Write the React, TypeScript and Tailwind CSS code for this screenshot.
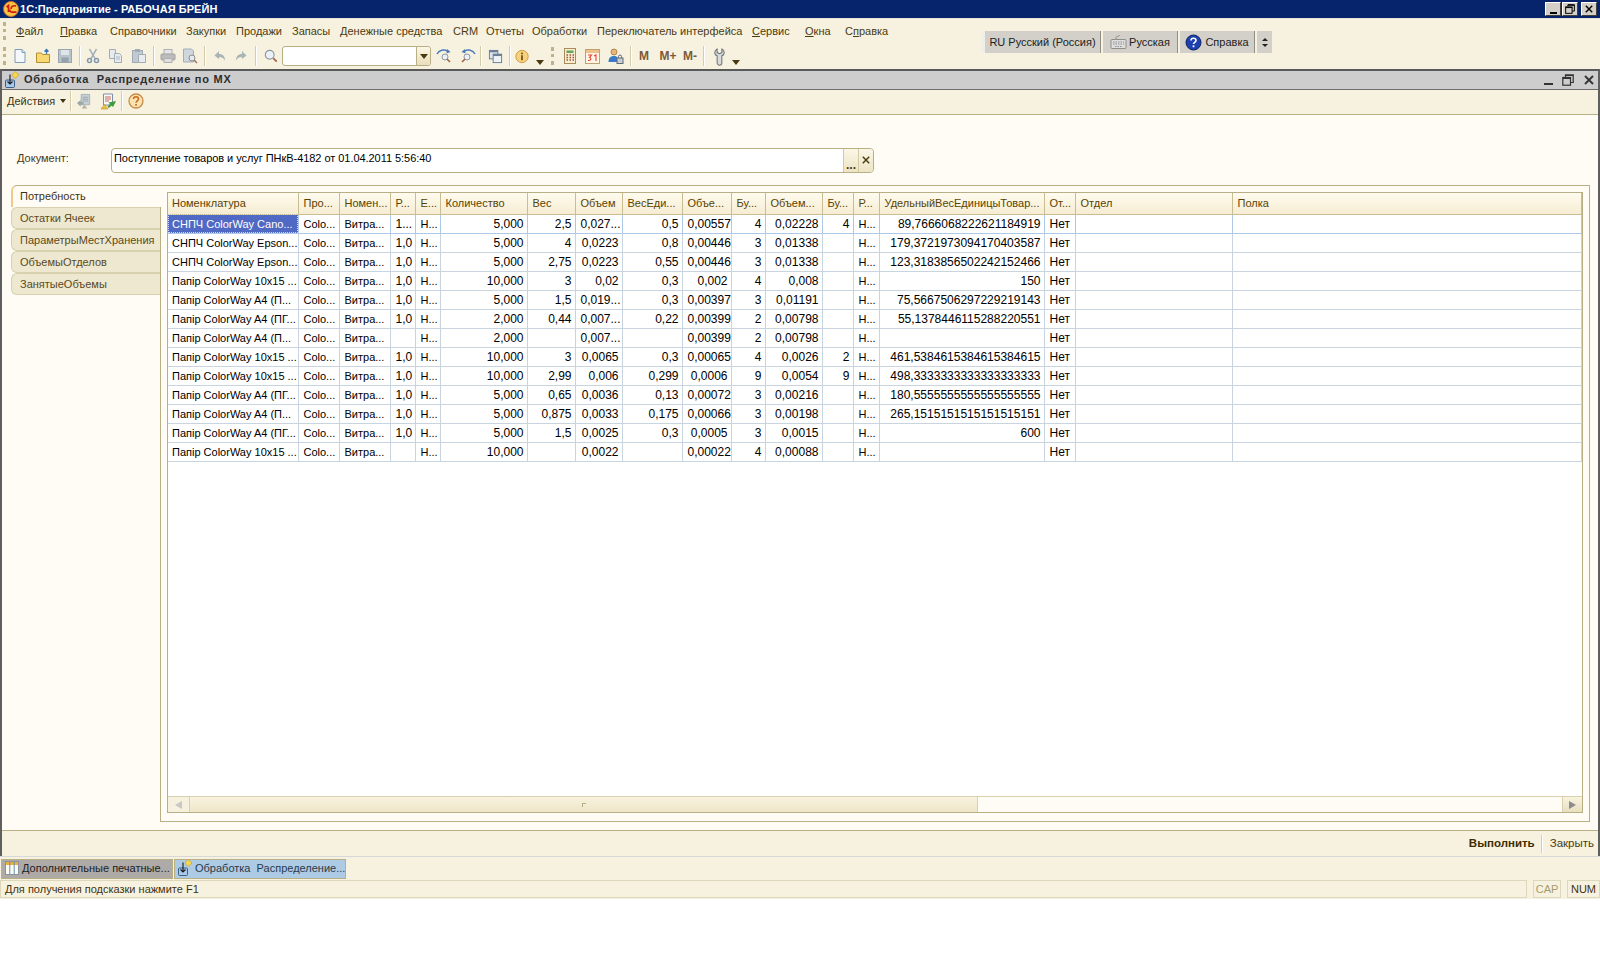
import type { ReactNode } from "react";

const FONT = "font-['Liberation_Sans',Arial,sans-serif]";

/* ---------- icons ---------- */

function Logo1C() {
  return (
    <svg width="16" height="16" viewBox="0 0 16 16" className="shrink-0">
      <circle cx="8" cy="8" r="7.5" fill="#f6c445" stroke="#c9702a" />
      <path d="M3.5 6 5.5 4.5V11M8 8c0-3 2-3.5 5-3.2M6.5 8.5c0 2.8 2.5 3 7 2.5" fill="none" stroke="#d01a12" strokeWidth="1.7" />
    </svg>
  );
}

function NewDoc() {
  return (
    <svg width="16" height="16" viewBox="0 0 16 16">
      <path d="M3 1.5h7l3 3v10H3z" fill="#f4f8fd" stroke="#7f9db9" />
      <path d="M10 1.5v3h3" fill="#d5e3f2" stroke="#7f9db9" />
    </svg>
  );
}

function Folder() {
  return (
    <svg width="16" height="16" viewBox="0 0 16 16">
      <path d="M1.5 5h5l1 1.500h7v8h-13z" fill="#f8d872" stroke="#b48f32" />
      <path d="M11.500 6V1.500M9.500 3.500l2-2 2 2" fill="none" stroke="#3a78b8" strokeWidth="1.300" />
    </svg>
  );
}

function Save() {
  return (
    <svg width="16" height="16" viewBox="0 0 16 16">
      <rect x="1.500" y="1.500" width="13" height="13" fill="#b8c3cc" stroke="#9aa5ae" />
      <rect x="4" y="2" width="8" height="5" fill="#dfe4e8" />
      <rect x="4.500" y="9.500" width="7" height="4.500" fill="#95a1ab" />
    </svg>
  );
}

function Cut() {
  return (
    <svg width="16" height="16" viewBox="0 0 16 16" fill="none" stroke="#a5b1bb" strokeWidth="1.500">
      <path d="M4.500 1 10 10.500M11.500 1 6 10.500" />
      <circle cx="4.500" cy="12.500" r="2" stroke="#8398ad" />
      <circle cx="11.500" cy="12.500" r="2" stroke="#8398ad" />
    </svg>
  );
}

function Copy() {
  return (
    <svg width="16" height="16" viewBox="0 0 16 16" fill="#e6ebef" stroke="#a2adb6">
      <path d="M1.500 1.500h6v9h-6z" />
      <path d="M6.500 5.500h5l2 2v7h-7z" />
      <path d="M8 9h4M8 11h4" strokeWidth="0.800" />
    </svg>
  );
}

function Paste() {
  return (
    <svg width="16" height="16" viewBox="0 0 16 16">
      <rect x="1.500" y="2.500" width="10" height="12" fill="#c1cad1" stroke="#a0abb4" />
      <rect x="4" y="1" width="5" height="3" fill="#a0abb4" />
      <path d="M7.500 6.500h7v8h-7z" fill="#e6ebef" stroke="#a2adb6" />
    </svg>
  );
}

function Printer() {
  return (
    <svg width="16" height="16" viewBox="0 0 16 16">
      <rect x="4" y="1.500" width="8" height="5" fill="#e3e6e8" stroke="#b0b0b0" />
      <rect x="1" y="6" width="14" height="6" rx="1" fill="#bcbcbc" stroke="#a0a0a0" />
      <rect x="4" y="10.500" width="8" height="4" fill="#dedede" stroke="#b0b0b0" />
    </svg>
  );
}

function Preview() {
  return (
    <svg width="16" height="16" viewBox="0 0 16 16">
      <path d="M1.500 1h8l2 2v11h-10z" fill="#cfd7de" stroke="#a2adb6" />
      <circle cx="10" cy="10" r="3" fill="#e3e9ee" stroke="#8d8d8d" />
      <path d="m12 12 3 3" stroke="#9a7b68" strokeWidth="1.600" />
    </svg>
  );
}

function Undo({ flip }: { flip?: boolean }) {
  return (
    <svg width="14" height="14" viewBox="0 0 14 14" className={flip ? "-scale-x-100" : ""}>
      <path d="M6 2 1.500 6.500 6 10V8c3 0 4.500 1 6 3.500C12 7.500 10 5 6 5z" fill="#a9b4b4" />
    </svg>
  );
}

function Lens({ size = 16 }: { size?: number }) {
  return (
    <svg width={size} height={size} viewBox="0 0 16 16">
      <circle cx="6.500" cy="6.500" r="5" fill="#eaf1f8" stroke="#8d97a0" strokeWidth="1.300" />
      <path d="m10.500 10.500 4 4" stroke="#a5664a" strokeWidth="2" />
    </svg>
  );
}

function NavSearch({ flip }: { flip?: boolean }) {
  return (
    <svg width="17" height="16" viewBox="0 0 17 16" className={flip ? "-scale-x-100" : ""}>
      <path d="M1 6C3 2 8 1 12 3.500" fill="none" stroke="#4a7db8" strokeWidth="1.500" />
      <path d="m11 1 3.500 3-4 1.500z" fill="#4a7db8" />
      <circle cx="9" cy="9" r="3" fill="#eaf1f8" stroke="#8d97a0" />
      <path d="m11 11 3 3" stroke="#a5664a" strokeWidth="1.700" />
    </svg>
  );
}

function Windows() {
  return (
    <svg width="15" height="15" viewBox="0 0 16 16">
      <rect x="1.500" y="1.500" width="9" height="9" fill="#dce6f0" stroke="#6a7d92" />
      <rect x="1.500" y="1.500" width="9" height="2" fill="#6a7d92" />
      <rect x="5.500" y="5.500" width="9" height="9" fill="#eef3f8" stroke="#6a7d92" />
      <rect x="5.500" y="5.500" width="9" height="2" fill="#6a7d92" />
    </svg>
  );
}

function Info() {
  return (
    <svg width="17" height="17" viewBox="0 0 17 17">
      <circle cx="8.500" cy="8.500" r="7.500" fill="#f7d27c" stroke="#c98f3c" />
      <rect x="7.500" y="7" width="2" height="6" fill="#6b4a12" />
      <rect x="7.500" y="3.800" width="2" height="2" fill="#6b4a12" />
    </svg>
  );
}

function Calc() {
  return (
    <svg width="14" height="16" viewBox="0 0 14 16">
      <rect x="1.500" y="0.500" width="11" height="15" fill="#f6eecf" stroke="#a88d58" />
      <rect x="3.500" y="2.500" width="7" height="2.500" fill="#6aa35a" />
      <path d="M3.500 7h1.500M6.500 7H8M9.500 7H11M3.500 9.500h1.500M6.500 9.500H8M9.500 9.500H11M3.500 12h1.500M6.500 12H8M9.500 12H11" stroke="#a5503a" strokeWidth="1.400" />
    </svg>
  );
}

function Calendar() {
  return (
    <svg width="15" height="16" viewBox="0 0 15 16">
      <rect x="0.500" y="1.500" width="14" height="14" fill="#fff6e8" stroke="#c4a06e" />
      <rect x="1" y="2" width="13" height="3" fill="#eec08a" />
      <path d="M3 7h3.500L4.500 9.500c2 0 2 3.500-1.500 3M9 8l2-1v6" fill="none" stroke="#e8412c" strokeWidth="1.100" />
    </svg>
  );
}

function UserLock() {
  return (
    <svg width="16" height="17" viewBox="0 0 16 17">
      <circle cx="6" cy="4" r="3" fill="#eab575" stroke="#9a6a2f" strokeWidth="0.700" />
      <path d="M0.500 14c0-4 2-6 5.500-6s4 2 4 6z" fill="#3a78c8" />
      <rect x="9" y="10" width="6" height="5.500" fill="#c9ced4" stroke="#5f6b77" />
      <path d="M10.500 10V8.500a1.500 1.500 0 0 1 3 0V10" fill="none" stroke="#5f6b77" />
    </svg>
  );
}

function Wrench() {
  return (
    <svg width="11" height="19" viewBox="0 0 14 22">
      <path d="M4 1.500V6l3 1.500L10 6V1.500c2 1 3 3 3 4.500 0 2-1 3.500-3 4v9a2.500 2.500 0 0 1-6 0v-9C2 9.500 1 8 1 6c0-1.500 1-3.500 3-4.500z" fill="#d8dadc" stroke="#6e7276" strokeWidth="1.300" />
    </svg>
  );
}

function Caret() {
  return <span className="block w-0 h-0 border-x-[4px] border-x-transparent border-t-[5px] border-t-[#4a3a10]" />;
}

function Grip({ className }: { className: string }) {
  return <div className={`${className} h-[18px] border-l-[3px] border-dotted border-[#bdb28a]`} />;
}

function Sep({ className }: { className: string }) {
  return (
    <div className={`${className} flex justify-center shrink-0`}>
      <div className="w-[2px] h-[20px] border-l border-[#d5cca8] border-r border-r-white" />
    </div>
  );
}

function Slot({ className, children }: { className: string; children: ReactNode }) {
  return <div className={`${className} h-[22px] flex items-center justify-center shrink-0`}>{children}</div>;
}

function DocIcon() {
  return (
    <svg width="18" height="18" viewBox="0 0 18 18" className="shrink-0">
      <path d="M11 0.500 15 4l-4 3.500L8 4z" fill="#f8d848" stroke="#c8a030" strokeWidth="0.700" />
      <rect x="1.500" y="9" width="9" height="7.500" rx="1" fill="#a9c9ea" stroke="#3d5f85" />
      <path d="M6 3.500v9M3.500 10.500 6 13l2.500-2.500" fill="none" stroke="#1a1a1a" strokeWidth="1.100" />
    </svg>
  );
}

function HelpCircle() {
  return (
    <svg width="16" height="16" viewBox="0 0 16 16">
      <circle cx="8" cy="8" r="7" fill="#fbe3b0" stroke="#c98b4a" strokeWidth="1.300" />
      <path d="M5.500 6c0-3 5-3 5 0 0 1.800-2.500 1.800-2.500 3.800" fill="none" stroke="#c86a20" strokeWidth="1.500" />
      <rect x="7.200" y="11" width="1.700" height="1.700" fill="#c86a20" />
    </svg>
  );
}

function ActionOne() {
  return (
    <svg width="17" height="17" viewBox="0 0 17 17">
      <path d="M5.500 1h9v11h-9z" fill="#c8d0d6" stroke="#a9b2b9" />
      <path d="M7 4h6M7 6h6M7 8h6" stroke="#9aa5ad" />
      <path d="m1 10 4-3v2h3v3H5v2z" fill="#9ba8a5" />
      <path d="M6 16l3-4 3 4z" fill="#b5aea0" />
    </svg>
  );
}

function ActionTwo() {
  return (
    <svg width="17" height="17" viewBox="0 0 17 17">
      <path d="M3.500 1h9v11h-9z" fill="#f6f8fb" stroke="#7c8fa5" />
      <path d="M5 4h6M5 6h6M5 8h4" stroke="#c46a50" />
      <path d="m16 8-3 6-1.500-1.500L9 15 7.500 13.500 10 11 8.500 9.500z" fill="#3e9a3a" />
      <path d="M1 16l3.500-4.500L8 16z" fill="#f0c040" stroke="#b48f32" strokeWidth="0.600" />
    </svg>
  );
}

function Keyboard() {
  return (
    <svg width="17" height="16" viewBox="0 0 17 16" fill="none" stroke="#8e8e8e" className="shrink-0">
      <path d="M6 5V3.500C6 2 9 3 9.500 1" />
      <rect x="1" y="5.500" width="15" height="9" rx="1" fill="#dedede" />
      <path d="M3 8h11M3 10h11M5 12.500h7" strokeDasharray="1.500 1" />
    </svg>
  );
}

function BlueHelp() {
  return (
    <svg width="17" height="17" viewBox="0 0 17 17" className="shrink-0">
      <circle cx="8.500" cy="8.500" r="7.500" fill="#1d3fb0" stroke="#0d2160" />
      <path d="M6 6.500c0-3 5-3 5 0 0 1.800-2.500 1.800-2.500 3.500" fill="none" stroke="#fff" strokeWidth="1.600" />
      <rect x="7.600" y="11.400" width="1.800" height="1.800" fill="#fff" />
    </svg>
  );
}

function ColumnsIcon() {
  return (
    <svg width="14" height="14" viewBox="0 0 14 14" className="shrink-0">
      <rect x="0.500" y="0.500" width="13" height="13" fill="#fbfbf3" stroke="#8a94a0" />
      <rect x="1" y="1" width="12" height="3" fill="#e8b23c" />
      <path d="M4.800 1v12M9.200 1v12" stroke="#6f8bb0" />
    </svg>
  );
}

/* ---------- window buttons ---------- */

function WinButton({ children }: { children: ReactNode }) {
  return (
    <div className="w-[16px] h-[14px] bg-[#d4d0c8] border border-t-white border-l-white border-r-[#404040] border-b-[#404040] flex items-center justify-center">
      {children}
    </div>
  );
}

function RestoreGlyph({ color, size }: { color: string; size: number }) {
  return (
    <svg width={size} height={size} viewBox="0 0 12 12" fill="none" stroke={color} strokeWidth="1.200">
      <path d="M3.500 3V0.800h7.700v7.700H8.500" />
      <rect x="0.800" y="3.500" width="7.700" height="7.700" />
      <path d="M0.800 4.300h7.700M3.500 1.500h7.700" />
    </svg>
  );
}

function CloseGlyph({ color, size }: { color: string; size: number }) {
  return (
    <svg width={size} height={size} viewBox="0 0 10 10" fill="none" stroke={color} strokeWidth="1.800">
      <path d="m1 1 8 8M9 1l-8 8" />
    </svg>
  );
}

/* ---------- data ---------- */

const MENU = [
  { pre: "", u: "Ф", post: "айл", cls: "w-[44px]" },
  { pre: "", u: "П", post: "равка", cls: "w-[50px]" },
  { pre: "Справочники", u: "", post: "", cls: "w-[76px]" },
  { pre: "Закупки", u: "", post: "", cls: "w-[50px]" },
  { pre: "Продажи", u: "", post: "", cls: "w-[56px]" },
  { pre: "Запасы", u: "", post: "", cls: "w-[48px]" },
  { pre: "Денежные средства", u: "", post: "", cls: "w-[113px]" },
  { pre: "CRM", u: "", post: "", cls: "w-[33px]" },
  { pre: "Отчеты", u: "", post: "", cls: "w-[46px]" },
  { pre: "Обработки", u: "", post: "", cls: "w-[65px]" },
  { pre: "Переключатель интерфейса", u: "", post: "", cls: "w-[155px]" },
  { pre: "", u: "С", post: "ервис", cls: "w-[53px]" },
  { pre: "", u: "О", post: "кна", cls: "w-[40px]" },
  { pre: "С", u: "п", post: "равка", cls: "w-[50px]" },
];

const COLS = [
  { title: "Номенклатура", w: "w-[130px]", right: false, size: "text-[11px] pt-px" },
  { title: "Про...", w: "w-[41px]", right: false, size: "text-[11px] pt-px" },
  { title: "Номен...", w: "w-[51px]", right: false, size: "text-[11px] pt-px" },
  { title: "Р...", w: "w-[25px]", right: false, size: "text-[12px]" },
  { title: "Е...", w: "w-[25px]", right: false, size: "text-[11px] pt-px" },
  { title: "Количество", w: "w-[87px]", right: true, size: "text-[12px]" },
  { title: "Вес", w: "w-[48px]", right: true, size: "text-[12px]" },
  { title: "Объем", w: "w-[47px]", right: true, size: "text-[12px]" },
  { title: "ВесЕди...", w: "w-[60px]", right: true, size: "text-[12px]" },
  { title: "Объе...", w: "w-[49px]", right: true, size: "text-[12px]" },
  { title: "Бу...", w: "w-[34px]", right: true, size: "text-[12px]" },
  { title: "Объем...", w: "w-[57px]", right: true, size: "text-[12px]" },
  { title: "Бу...", w: "w-[31px]", right: true, size: "text-[12px]" },
  { title: "Р...", w: "w-[26px]", right: false, size: "text-[11px] pt-px" },
  { title: "УдельныйВесЕдиницыТовар...", w: "w-[165px]", right: true, size: "text-[12px]" },
  { title: "От...", w: "w-[31px]", right: false, size: "text-[12px]" },
  { title: "Отдел", w: "w-[157px]", right: false, size: "text-[11px] pt-px" },
  { title: "Полка", w: "w-[349px]", right: false, size: "text-[11px] pt-px" },
];

const CANO = "СНПЧ ColorWay Cano...";
const EPSON = "СНПЧ ColorWay Epson...";
const P10 = "Папір ColorWay 10x15 ...";
const PA = "Папір ColorWay A4 (П...";
const PG = "Папір ColorWay A4 (ПГ...";

const ROWS: string[][] = [
  [CANO, "1...", "5,000", "2,5", "0,027...", "0,5", "0,00557", "4", "0,02228", "4", "89,7666068222621184919"],
  [EPSON, "1,0", "5,000", "4", "0,0223", "0,8", "0,00446", "3", "0,01338", "", "179,3721973094170403587"],
  [EPSON, "1,0", "5,000", "2,75", "0,0223", "0,55", "0,00446", "3", "0,01338", "", "123,3183856502242152466"],
  [P10, "1,0", "10,000", "3", "0,02", "0,3", "0,002", "4", "0,008", "", "150"],
  [PA, "1,0", "5,000", "1,5", "0,019...", "0,3", "0,00397", "3", "0,01191", "", "75,5667506297229219143"],
  [PG, "1,0", "2,000", "0,44", "0,007...", "0,22", "0,00399", "2", "0,00798", "", "55,1378446115288220551"],
  [PA, "", "2,000", "", "0,007...", "", "0,00399", "2", "0,00798", "", ""],
  [P10, "1,0", "10,000", "3", "0,0065", "0,3", "0,00065", "4", "0,0026", "2", "461,5384615384615384615"],
  [P10, "1,0", "10,000", "2,99", "0,006", "0,299", "0,0006", "9", "0,0054", "9", "498,3333333333333333333"],
  [PG, "1,0", "5,000", "0,65", "0,0036", "0,13", "0,00072", "3", "0,00216", "", "180,5555555555555555555"],
  [PA, "1,0", "5,000", "0,875", "0,0033", "0,175", "0,00066", "3", "0,00198", "", "265,1515151515151515151"],
  [PG, "1,0", "5,000", "1,5", "0,0025", "0,3", "0,0005", "3", "0,0015", "", "600"],
  [P10, "", "10,000", "", "0,0022", "", "0,00022", "4", "0,00088", "", ""],
];

function expandRow(r: string[]) {
  return [r[0], "Colo...", "Витра...", r[1], "Н...", r[2], r[3], r[4], r[5], r[6], r[7], r[8], r[9], "Н...", r[10], "Нет", "", ""];
}

const TABS = ["Потребность", "Остатки Ячеек", "ПараметрыМестХранения", "ОбъемыОтделов", "ЗанятыеОбъемы"];

/* ---------- parts ---------- */

function Toolbar() {
  return (
    <div className="h-[22px] flex items-center mt-[2px]">
      <div className="w-[3px]" />
      <Grip className="w-[6px]" />
      <Slot className="w-[22px]"><NewDoc /></Slot>
      <Slot className="w-[24px]"><Folder /></Slot>
      <Slot className="w-[20px]"><Save /></Slot>
      <Sep className="w-[10px]" />
      <Slot className="w-[16px]"><Cut /></Slot>
      <Slot className="w-[30px]"><Copy /></Slot>
      <Slot className="w-[16px]"><Paste /></Slot>
      <Sep className="w-[13px]" />
      <Slot className="w-[16px]"><Printer /></Slot>
      <Slot className="w-[28px]"><Preview /></Slot>
      <Sep className="w-[2px]" />
      <Slot className="w-[28px]"><Undo /></Slot>
      <Slot className="w-[14px]"><Undo flip /></Slot>
      <Sep className="w-[16px]" />
      <Slot className="w-[14px]"><Lens /></Slot>
      <div className="ml-[4px] w-[149px] h-[20px] bg-white border border-[#b9af85] rounded-[3px] flex justify-end shrink-0">
        <div className="w-[14px] border-l border-[#b9af85] bg-gradient-to-b from-[#fbf7e6] to-[#e9dfbb] rounded-r-[3px] flex items-center justify-center">
          <Caret />
        </div>
      </div>
      <Slot className="w-[26px]"><NavSearch /></Slot>
      <Slot className="w-[20px]"><NavSearch flip /></Slot>
      <Sep className="w-[8px]" />
      <Slot className="w-[20px]"><Windows /></Slot>
      <Sep className="w-[10px]" />
      <Slot className="w-[14px]"><Info /></Slot>
      <Slot className="w-[22px]"><div className="mt-[13px]"><Caret /></div></Slot>
      <Grip className="w-[7px]" />
      <Slot className="w-[24px]"><Calc /></Slot>
      <Slot className="w-[20px]"><Calendar /></Slot>
      <Slot className="w-[28px]"><UserLock /></Slot>
      <Sep className="w-[2px]" />
      <Slot className="w-[24px]"><span className="text-[12px] font-bold text-[#7a5a3a]">M</span></Slot>
      <Slot className="w-[24px]"><span className="text-[12px] font-bold text-[#7a5a3a]">M+</span></Slot>
      <Slot className="w-[20px]"><span className="text-[12px] font-bold text-[#7a5a3a]">M-</span></Slot>
      <Sep className="w-[8px]" />
      <Slot className="w-[22px]"><Wrench /></Slot>
      <Slot className="w-[12px]"><div className="mt-[13px]"><Caret /></div></Slot>
    </div>
  );
}

function LangBar() {
  return (
    <div className="mt-[12px] ml-[982px] h-[22px] flex items-stretch gap-[2px] text-[11px] text-[#222] whitespace-nowrap">
      <div className="w-[119px] border-l-[3px] border-l-[#efefe8] bg-[#d2d0c9] flex items-center justify-center border-r border-r-[#8f8f88]">
        RU Русский (Россия)
      </div>
      <div className="w-[75px] bg-[#d2d0c9] flex items-center justify-center gap-[2px] border-r border-r-[#8f8f88]">
        <Keyboard />
        Русская
      </div>
      <div className="w-[75px] bg-[#d2d0c9] flex items-center justify-center gap-[3px] border-r border-r-[#8f8f88]">
        <BlueHelp />
        Справка
      </div>
      <div className="w-[15px] bg-[#d2d0c9] flex flex-col items-center justify-center gap-[3px]">
        <span className="w-0 h-0 border-x-[3px] border-x-transparent border-b-[3px] border-b-[#222]" />
        <span className="w-0 h-0 border-x-[3px] border-x-transparent border-t-[3px] border-t-[#222]" />
      </div>
    </div>
  );
}

function Grid() {
  return (
    <div className="flex-1 min-w-0 border border-[#b9af85] bg-white flex flex-col min-h-0">
      <div className="flex-1 overflow-hidden">
        <table className="table-fixed border-collapse w-[1413px]">
          <colgroup>
            {COLS.map((c, i) => (
              <col key={i} className={c.w} />
            ))}
          </colgroup>
          <thead>
            <tr className="h-[21px]">
              {COLS.map((c, i) => (
                <th
                  key={i}
                  className={`p-0 ${i === 0 ? "pl-[4px]" : "pl-[5px]"} font-normal text-[11px] text-left text-[#5a4300] whitespace-nowrap overflow-hidden bg-gradient-to-b from-[#fffbee] to-[#f5ecd2] border-r border-b border-[#c9be93]`}
                >
                  {c.title}
                </th>
              ))}
            </tr>
          </thead>
          <tbody>
            {ROWS.map((r, ri) => (
              <tr key={ri} className="h-[19px]">
                {expandRow(r).map((v, ci) => {
                  const sel = ri === 0 && ci === 0;
                  const line = ri === 0 ? "border-[#aec8e8]" : "border-[#c8d4e0]";
                  return (
                    <td
                      key={ci}
                      className={`p-0 ${ci === 0 ? "pl-[4px]" : "pl-[5px]"} pr-[3px] whitespace-nowrap overflow-hidden border-r border-b ${COLS[ci].size} ${line} ${
                        COLS[ci].right ? "text-right" : "text-left"
                      } ${sel ? "bg-[#4f69c4] text-white outline-1 outline-dotted outline-offset-[-1px] outline-[#d5dcf2]" : "text-black"}`}
                    >
                      {v}
                    </td>
                  );
                })}
              </tr>
            ))}
          </tbody>
        </table>
      </div>
      <div className="h-[16px] flex border-t border-[#d8d0ae] bg-[#fffcf5]">
        <div className="w-[22px] border-r border-[#d8d0ae] bg-[#f6f1de] flex items-center justify-center">
          <span className="w-0 h-0 border-y-[4px] border-y-transparent border-r-[7px] border-r-[#c9c9c4]" />
        </div>
        <div className="w-[788px] border-r border-[#d8d0ae] bg-gradient-to-b from-[#f8f3df] to-[#efe6c8] flex items-center justify-center">
          <span className="w-[4px] h-[4px] border-l border-t border-[#b5ac88]" />
        </div>
        <div className="flex-1" />
        <div className="w-[20px] border-l border-[#d8d0ae] bg-gradient-to-b from-[#f8f3df] to-[#e9dfbf] flex items-center justify-center">
          <span className="w-0 h-0 border-y-[4px] border-y-transparent border-l-[7px] border-l-[#8a8a90]" />
        </div>
      </div>
    </div>
  );
}

export default function App() {
  return (
    <div className={`${FONT} w-[1600px] h-[980px] bg-white text-[11px] overflow-hidden`}>
      {/* Заголовок приложения */}
      <div className="h-[18px] bg-[#06246c] flex items-center pl-[3px] pr-[3px]">
        <Logo1C />
        <span className="ml-[1px] text-white font-bold text-[11px] tracking-[0.05px]">1С:Предприятие - РАБОЧАЯ БРЕЙН</span>
        <div className="ml-auto flex items-center">
          <WinButton><span className="mt-[7px] w-[7px] h-[2px] bg-black" /></WinButton>
          <div className="w-px" />
          <WinButton><RestoreGlyph color="#000" size={10} /></WinButton>
          <div className="w-[3px]" />
          <WinButton><CloseGlyph color="#000" size={8} /></WinButton>
        </div>
      </div>

      {/* Меню и панели */}
      <div className="h-[51px] bg-[#f7f2df] border-t border-[#e8e4d4] flex">
        <div className="w-0">
          <div className="w-[979px] h-[24px] flex items-center text-[11px] text-[#4a3a10]">
            <div className="w-[3px]" />
            <Grip className="w-[13px]" />
            {MENU.map((m, i) => (
              <span key={i} className={`${m.cls} whitespace-nowrap shrink-0`}>
                {m.pre}
                {m.u && <u>{m.u}</u>}
                {m.post}
              </span>
            ))}
          </div>
          <div className="w-[979px]">
            <Toolbar />
          </div>
        </div>
        <LangBar />
      </div>

      {/* Окно обработки */}
      <div className="h-[787px] border-x-2 border-[#5f5f5f] flex flex-col bg-[#fffcf5]">
        <div className="h-[21px] bg-[#cdcdcd] border-t-2 border-b border-t-[#5a5a5a] border-b-[#6d6d6d] flex items-center pl-[2px] pr-[3px] shrink-0">
          <DocIcon />
          <span className="ml-[2px] pb-[2px] font-bold text-[11px] tracking-[0.75px] text-[#2d2d2d] whitespace-pre">Обработка  Распределение по МХ</span>
          <div className="ml-auto flex items-center">
            <span className="w-[9px] h-[2px] bg-[#333] mt-[7px]" />
            <div className="w-[9px]" />
            <RestoreGlyph color="#333" size={12} />
            <div className="w-[10px]" />
            <CloseGlyph color="#333" size={10} />
            <div className="w-[1px]" />
          </div>
        </div>

        <div className="h-[25px] bg-[#f7f2df] border-b border-[#b9af85] flex items-center pl-[5px] pb-[2px] text-[#3f3210] shrink-0">
          <span className="w-[50px]">Действия</span>
          <span className="ml-[3px] w-0 h-0 border-x-[3px] border-x-transparent border-t-[4px] border-t-[#3f3210] shrink-0" />
          <Sep className="w-[10px]" />
          <Slot className="w-[16px]"><ActionOne /></Slot>
          <Slot className="ml-[4px] w-[24px]"><ActionTwo /></Slot>
          <Sep className="w-[4px]" />
          <Slot className="w-[24px]"><HelpCircle /></Slot>
        </div>

        <div className="flex-1 min-h-0 flex flex-col pt-[33px] pb-[8px] pl-[9px] pr-[8px]">
          <div className="h-[24px] flex items-center shrink-0">
            <span className="w-[100px] pl-[6px] mb-[4px] text-[#4a3a10]">Документ:</span>
            <div className="w-[763px] h-[25px] bg-white border border-[#b9af85] rounded-[4px] flex items-stretch">
              <span className="flex-1 pl-[2px] pt-[1px] text-black tracking-[-0.05px]">Поступление товаров и услуг ПНкВ-4182 от 01.04.2011 5:56:40</span>
              <div className="w-[15px] border-l border-[#d3caa5] bg-gradient-to-b from-[#fbf7e6] to-[#ede4c4] flex items-end justify-center text-[12px] text-[#4a3a10] font-bold leading-[14px]">...</div>
              <div className="w-[15px] border-l border-[#d3caa5] bg-gradient-to-b from-[#fbf7e6] to-[#ede4c4] rounded-r-[4px] flex items-center justify-center">
                <CloseGlyph color="#4a3a10" size={8} />
              </div>
            </div>
          </div>

          <div className="flex-1 min-h-0 flex mt-[13px]">
            <div className="w-[150px] -mr-px relative flex flex-col shrink-0">
              {TABS.map((t, i) => (
                <div
                  key={t}
                  className={
                    i === 0
                      ? "h-[22px] pl-[7px] pb-[1px] flex items-center border-t border-l-2 border-t-[#b9af85] border-l-[#f0c98a] rounded-tl-[6px] bg-[#fffcf5] text-[#3f3210]"
                      : "h-[22px] mr-px pl-[8px] flex items-center border border-r-0 border-[#d8d0ae] rounded-l-[6px] bg-[#efe8d0] text-[#5a4a20] whitespace-nowrap"
                  }
                >
                  {t}
                </div>
              ))}
            </div>
            <div className="w-[1430px] border border-[#b9af85] pt-[6px] pl-[6px] pr-[6px] pb-[8px] flex">
              <Grid />
            </div>
          </div>
        </div>

        <div className="h-[26px] bg-[#f7f2df] border-t border-[#b9af85] flex items-center justify-end pr-[4px] shrink-0">
          <span className="font-bold text-[11.5px] text-[#3f2c00]">Выполнить</span>
          <div className="ml-[6px] w-[2px] h-[18px] border-l border-[#d5cca8] border-r border-r-white" />
          <span className="ml-[7px] text-[11.5px] text-[#4a3a10]">Закрыть</span>
        </div>
      </div>

      {/* Панель открытых окон */}
      <div className="h-[24px] bg-[#f7f2df] border-t border-[#d8d8d8] flex items-center pl-[1px] gap-[1px] text-[#222]">
        <div className="w-[172px] h-[20px] bg-[#aeaaa8] border border-[#b9af85] flex items-center pl-[3px] pb-px gap-[3px] whitespace-nowrap">
          <ColumnsIcon />
          Дополнительные печатные...
        </div>
        <div className="w-[172px] h-[20px] bg-[#aecbe6] border border-[#b9af85] flex items-center pl-[2px] pb-px whitespace-nowrap text-[#2b3a4a]">
          <DocIcon />
          <span className="whitespace-pre">Обработка  Распределение...</span>
        </div>
      </div>

      {/* Строка состояния */}
      <div className="h-[19px] bg-[#f7f2df] flex items-stretch gap-[6px] pb-px text-[#3f3210]">
        <div className="w-[1527px] border border-[#ddd8bc] pl-[4px] pt-px flex items-center">Для получения подсказки нажмите F1</div>
        <div className="w-[28px] border border-[#ddd8bc] pt-px flex items-center justify-center text-[#a59a6e]">CAP</div>
        <div className="w-[33px] border border-[#ddd8bc] pt-px flex items-center justify-center">NUM</div>
      </div>
    </div>
  );
}
